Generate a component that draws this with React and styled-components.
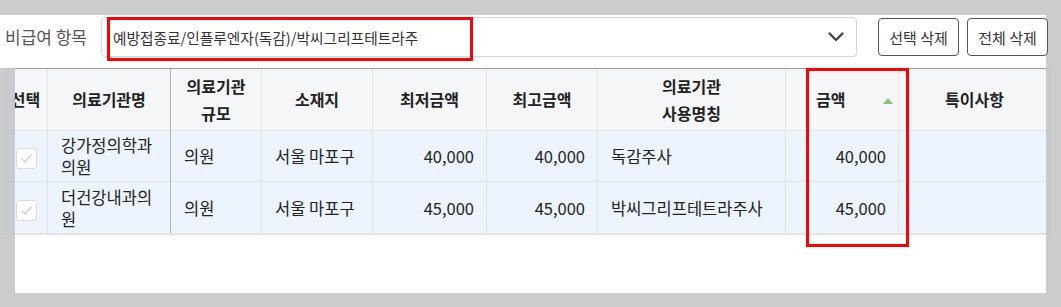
import React from "react";
import styled, { createGlobalStyle } from "styled-components";

const GlobalStyle = createGlobalStyle`
  html, body { margin: 0; padding: 0; }
  body {
    background: #cccccc;
    font-family: "Noto Sans CJK KR", "Noto Sans", sans-serif;
    color: #222;
  }
  * { box-sizing: border-box; }
`;

const Page = styled.div`
  position: relative;
  width: 1061px;
  height: 307px;
  padding-top: 15px;
  overflow: hidden;
`;

const Toolbar = styled.div`
  display: flex;
  align-items: flex-start;
  width: 1046px;
  height: 53px;
  padding: 2px 0 0 5px;
  background: #fff;
`;

const Label = styled.span`
  flex: none;
  width: 80px;
  font-size: 17px;
  line-height: 40px;
  color: #555;
  white-space: nowrap;
  margin-right: 16px;
`;

const Select = styled.div`
  flex: none;
  display: flex;
  align-items: center;
  justify-content: space-between;
  width: 756px;
  height: 40px;
  padding: 0 12px 0 11px;
  border: 1px solid #d6d6d6;
  border-radius: 4px;
  font-size: 14.7px;
  color: #333;
  background: #fff;
`;

const Button = styled.button`
  flex: none;
  width: ${(p) => p.$w || 81}px;
  height: 38px;
  margin: 1px 0 0 ${(p) => p.$gap}px;
  padding: 0;
  border: 1px solid #555;
  border-radius: 4px;
  background: #fff;
  font-family: inherit;
  font-size: 15px;
  color: #333;
  white-space: nowrap;
`;

const GridWrap = styled.div`
  position: relative;
  margin-left: 4px;
  width: 1047px;
  border-top: 1px solid #9a9a9a;
`;

const Grid = styled.div`
  display: grid;
  grid-template-columns: 44px 123px 91px 111px 114px 111px 188px 113px 152px;
  border-bottom: 2px solid #e4e4e4;
`;

const HeadCell = styled.div`
  position: relative;
  display: flex;
  align-items: center;
  justify-content: ${(p) => (p.$left ? "flex-start" : "center")};
  height: 62px;
  padding-left: ${(p) => (p.$left ? "30px" : "0")};
  background: #f5f6f8;
  border-right: 1px solid ${(p) => (p.$strong ? "#b0b0b0" : "#e3e3e3")};
  border-bottom: 1px solid #e3e3e3;
  font-size: 16px;
  font-weight: 700;
  line-height: 27px;
  text-align: center;
  color: #222;
  white-space: pre-line;
`;

const Cell = styled.div`
  display: flex;
  align-items: center;
  justify-content: ${(p) =>
    p.$align === "right" ? "flex-end" : p.$align === "center" ? "center" : "flex-start"};
  height: 51px;
  padding: ${(p) => (p.$align === "center" ? "0" : "0 12px 0 13px")};
  background: #edf4fd;
  border-right: 1px solid ${(p) => (p.$strong ? "#b0b0b0" : "#e3e3e3")};
  border-bottom: ${(p) => (p.$last ? 0 : 1)}px solid #e3e3e3;
  font-size: 16.5px;
  line-height: 22px;
  color: #222;
  white-space: pre-line;
`;

const CheckBox = styled.span`
  display: flex;
  align-items: center;
  justify-content: center;
  width: 21px;
  height: 21px;
  margin: 5px 0 0 2px;
  border: 1px solid #dcdcdc;
  border-radius: 3px;
  background: #fff;
`;

const SortMark = styled.svg`
  position: absolute;
  right: 5px;
  top: 29px;
`;

/* grey veil where the grid runs past the panel edges */
const EdgeVeil = styled.div`
  position: absolute;
  top: -1px;
  bottom: 0;
  ${(p) => (p.$side === "left" ? "left: 0; width: 11px;" : "right: 0; width: 5px;")}
  background: rgba(196, 198, 202, 0.93);
`;

const Below = styled.div`
  margin-left: 15px;
  width: 1031px;
  height: 58px;
  background: #fff;
`;

const Highlight = styled.div`
  position: absolute;
  left: ${(p) => p.$x}px;
  top: ${(p) => p.$y}px;
  width: ${(p) => p.$w}px;
  height: ${(p) => p.$h}px;
  border: 3px solid #ff0000;
  pointer-events: none;
`;

const Chevron = () => (
  <svg width="16" height="10" viewBox="0 0 16 10">
    <path d="M1.5 1.5 L8 8 L14.5 1.5" fill="none" stroke="#444" strokeWidth="2.4" strokeLinecap="round" strokeLinejoin="round" />
  </svg>
);

const Check = () => (
  <svg width="13" height="11" viewBox="0 0 13 11">
    <path d="M1.5 5.5 L5 9 L11.5 1.5" fill="none" stroke="#cfcfcf" strokeWidth="1.3" />
  </svg>
);

const headers = [
  { t: "선택" },
  { t: "의료기관명", strong: true },
  { t: "의료기관\n규모" },
  { t: "소재지" },
  { t: "최저금액" },
  { t: "최고금액" },
  { t: "의료기관\n사용명칭" },
  { t: "금액", left: true, sort: true },
  { t: "특이사항" },
];

const rows = [
  { name: "강가정의학과\n의원", size: "의원", loc: "서울 마포구", min: "40,000", max: "40,000", alias: "독감주사", amount: "40,000" },
  { name: "더건강내과의\n원", size: "의원", loc: "서울 마포구", min: "45,000", max: "45,000", alias: "박씨그리프테트라주사", amount: "45,000" },
];

export default function App() {
  return (
    <>
      <GlobalStyle />
      <Page>
        <Toolbar>
          <Label>비급여 항목</Label>
          <Select>
            <span>예방접종료/인플루엔자(독감)/박씨그리프테트라주</span>
            <Chevron />
          </Select>
          <Button $gap={21}>선택 삭제</Button>
          <Button $gap={8} $w={81}>전체 삭제</Button>
        </Toolbar>

        <GridWrap>
          <Grid>
            {headers.map((h) => (
              <HeadCell key={h.t} $strong={h.strong} $left={h.left}>
                {h.t}
                {h.sort && (
                  <SortMark width="10" height="6" viewBox="0 0 10 6">
                    <path d="M5 0 L10 6 L0 6 Z" fill="#8fc46a" />
                  </SortMark>
                )}
              </HeadCell>
            ))}
            {rows.map((r, i) => {
              const last = i === rows.length - 1;
              return (
                <React.Fragment key={r.name}>
                  <Cell $align="center" $last={last}>
                    <CheckBox>
                      <Check />
                    </CheckBox>
                  </Cell>
                  <Cell $strong $last={last}>{r.name}</Cell>
                  <Cell $last={last}>{r.size}</Cell>
                  <Cell $last={last}>{r.loc}</Cell>
                  <Cell $align="right" $last={last}>{r.min}</Cell>
                  <Cell $align="right" $last={last}>{r.max}</Cell>
                  <Cell $last={last}>{r.alias}</Cell>
                  <Cell $align="right" $last={last}>{r.amount}</Cell>
                  <Cell $last={last} />
                </React.Fragment>
              );
            })}
          </Grid>
          <EdgeVeil $side="left" />
          <EdgeVeil $side="right" />
        </GridWrap>

        <Below />

        <Highlight $x={107} $y={17} $w={366} $h={44} />
        <Highlight $x={806} $y={68} $w={103} $h={179} />
      </Page>
    </>
  );
}
